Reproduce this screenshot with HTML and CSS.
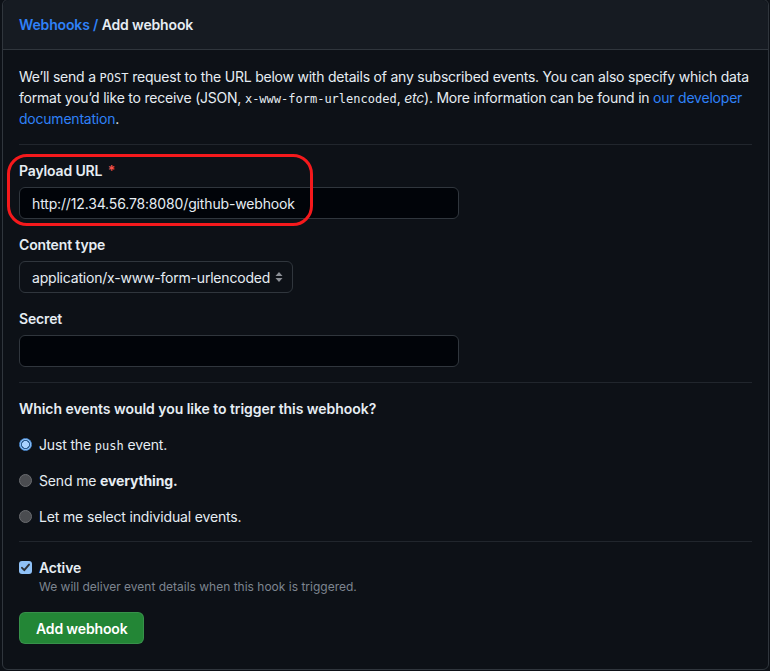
FILE: index.html
```html
<!DOCTYPE html>
<html lang="en">
<head>
<meta charset="UTF-8">
<meta name="viewport" content="width=device-width, initial-scale=1.0">
<title>Add webhook</title>
<link rel="stylesheet" href="styles.css">
</head>
<body>
<div class="box">
  <div class="box-header">
    <a href="#" class="crumb">Webhooks</a>&nbsp;<span class="slash">/</span>&nbsp;<span class="current">Add webhook</span>
  </div>

  <form class="box-body">
    <p class="intro">
      We’ll send a <code>POST</code> request to the URL below with details of any subscribed events. You can also specify which data format you’d like to receive (JSON, <code>x-www-form-urlencoded</code>, <em>etc</em>). More information can be found in <a href="#">our developer documentation</a>.
    </p>

    <hr>

    <div class="field">
      <label for="url">Payload URL <span class="req">*</span></label>
      <input type="text" id="url" class="input wide" value="http://12.34.56.78:8080/github-webhook">
    </div>

    <div class="field">
      <label for="ctype">Content type</label>
      <div class="select">
        <span>application/x-www-form-urlencoded</span>
        <svg width="8" height="12" viewBox="0 0 8 12"><path d="M4 1 7.5 5h-7z M4 11 .5 7h7z" fill="#8b8f96"/></svg>
      </div>
    </div>

    <div class="field">
      <label for="secret">Secret</label>
      <input type="text" id="secret" class="input wide">
    </div>

    <hr>

    <h3 class="events-title">Which events would you like to trigger this webhook?</h3>

    <div class="radio-row">
      <span class="radio checked"></span>
      <span>Just the <code>push</code> event.</span>
    </div>
    <div class="radio-row">
      <span class="radio"></span>
      <span>Send me <strong>everything.</strong></span>
    </div>
    <div class="radio-row">
      <span class="radio"></span>
      <span>Let me select individual events.</span>
    </div>

    <hr class="tight">

    <div class="active-row">
      <span class="check">
        <svg width="11" height="11" viewBox="0 0 11 11"><path d="M2 5.8 4.3 8.2 9 2.6" fill="none" stroke="#2b2f36" stroke-width="1.9" stroke-linecap="round" stroke-linejoin="round"/></svg>
      </span>
      <div>
        <div class="active-label">Active</div>
        <div class="note">We will deliver event details when this hook is triggered.</div>
      </div>
    </div>

    <button type="button" class="btn">Add webhook</button>

    <!-- annotation round the payload url -->
    <div class="highlight"></div>
  </form>
</div>
</body>
</html>
```

FILE: styles.css
```css
body {
  margin: 0;
  padding: 0;
  background-color: #0d1117;
  color: #e6edf3;
  font-family: Inter, "Noto Sans", sans-serif;
  font-size: 14px;
  line-height: 21px;
  letter-spacing: -0.15px;
}
a {
  color: #2f81f7;
  text-decoration: none;
}
code {
  font-family: "DejaVu Sans Mono", "Liberation Mono", monospace;
  font-size: 12px;
  line-height: 1;
  letter-spacing: 0;
}
.box {
  margin: -1px 1px 0 2px;
  border: 1px solid #30363d;
  border-radius: 6px;
  background-color: #0d1117;
}
.box-header {
  height: 49px;
  padding: 0 16px;
  display: flex;
  align-items: center;
  background-color: #161b22;
  border-bottom: 1px solid #30363d;
  border-radius: 6px 6px 0 0;
  font-weight: 600;
}
.crumb, .slash {
  color: #2f81f7;
}
.box-body {
  position: relative;
  padding: 16px 16px 25px;
}
.intro {
  margin: 0 0 15px;
  letter-spacing: -0.22px;
}
.intro code {
  letter-spacing: 0;
}
hr {
  border: 0;
  border-top: 1px solid #21262d;
  margin: 0 0 15px;
}
hr.tight {
  margin-top: 14px;
}
.field {
  margin-bottom: 15px;
}
label {
  display: block;
  font-weight: 600;
  margin-bottom: 6px;
}
.req {
  color: #f85149;
  margin-left: 2px;
}
.input {
  display: block;
  box-sizing: border-box;
  height: 32px;
  padding: 0 12px;
  background-color: #010409;
  border: 1px solid #30363d;
  border-radius: 6px;
  color: #e6edf3;
  font-family: inherit;
  font-size: 14px;
  letter-spacing: -0.15px;
  outline: none;
}
.wide {
  width: 440px;
}
.select {
  box-sizing: border-box;
  width: 274px;
  height: 32px;
  padding: 0 9px 0 12px;
  display: flex;
  align-items: center;
  justify-content: space-between;
  white-space: nowrap;
  letter-spacing: -0.2px;
  background-color: #0d1117;
  border: 1px solid #30363d;
  border-radius: 6px;
}
.events-title {
  margin: 0;
  font-size: 14px;
  font-weight: 600;
  letter-spacing: -0.05px;
}
.radio-row {
  margin-top: 15px;
  height: 21px;
  display: flex;
  align-items: center;
  gap: 7px;
}
.radio {
  box-sizing: border-box;
  width: 13px;
  height: 13px;
  border-radius: 50%;
  background-color: #4a4c50;
  border: 1px solid #6a6c70;
}
.radio.checked {
  background: radial-gradient(circle, #a9d2ff 0 3.2px, #2b5b8e 3.7px 4.3px, #8fc1f7 4.8px);
  border-color: #4f8fd6;
}
.active-row {
  display: flex;
  align-items: flex-start;
  gap: 7px;
}
.check {
  margin-top: 4px;
  width: 13px;
  height: 13px;
  border-radius: 3px;
  background-color: #8fc1f7;
  display: flex;
  align-items: center;
  justify-content: center;
}
.active-label {
  font-weight: 600;
}
.note {
  font-size: 12px;
  line-height: 18px;
  letter-spacing: 0;
  color: #7d8590;
}
.btn {
  margin-top: 16px;
  height: 32px;
  padding: 0 16px;
  background-color: #238636;
  border: 1px solid rgba(240, 246, 252, 0.1);
  border-radius: 6px;
  color: #ffffff;
  font-family: inherit;
  font-size: 14px;
  font-weight: 600;
  letter-spacing: -0.15px;
  cursor: pointer;
}
.highlight {
  position: absolute;
  left: 4px;
  top: 104px;
  width: 300px;
  height: 66px;
  border: 3px solid #f5191c;
  border-radius: 20px;
}
```
